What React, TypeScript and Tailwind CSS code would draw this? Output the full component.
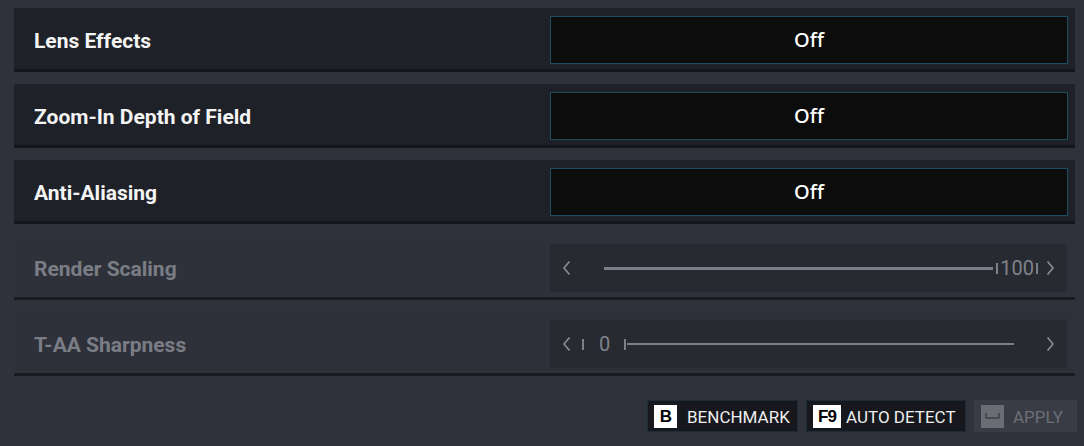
import React from "react";

const labelFont = { fontFamily: "Roboto, 'Noto Sans', sans-serif" };

function ChevronLeft() {
  return (
    <svg width="9" height="16" viewBox="0 0 9 16" className="shrink-0">
      <path d="M7.5 1.5 L2 8 L7.5 14.5" fill="none" stroke="#8a8d95" strokeWidth="1.6" />
    </svg>
  );
}
function ChevronRight() {
  return (
    <svg width="9" height="16" viewBox="0 0 9 16" className="shrink-0">
      <path d="M1.5 1.5 L7 8 L1.5 14.5" fill="none" stroke="#8a8d95" strokeWidth="1.6" />
    </svg>
  );
}
function Tick() {
  return <div className="w-[2px] h-[11px] bg-[#7d8088] shrink-0" />;
}

function ToggleRow({ label }: { label: string }) {
  return (
    <div className="h-16 flex items-start pt-2 pl-5 pr-[7px] bg-[#1f2128] border-b-[3px] border-[#15161b]">
      <div
        className="flex-1 h-12 flex items-center pt-[3px] text-[21px] font-bold text-[#f4f4f4]"
        style={labelFont}
      >
        {label}
      </div>
      <div
        className="w-[518px] h-12 flex items-center justify-center bg-[#0c0c0d] border border-[#1e4d61] text-[20px] font-medium text-white"
        style={{ fontFamily: "'Noto Sans', 'Open Sans', sans-serif" }}
      >
        Off
      </div>
    </div>
  );
}

function SliderRow({ label, children }: { label: string; children: React.ReactNode }) {
  return (
    <div className="h-16 flex items-start pt-2 pl-5 pr-[8px] bg-[#2f313a] border-b-[3px] border-[#1a1b20]">
      <div
        className="flex-1 h-12 flex items-center pt-[3px] text-[21px] font-bold text-[#7a7d85]"
        style={labelFont}
      >
        {label}
      </div>
      <div className="w-[517px] h-12 flex items-center px-3 bg-[#282a32] text-[#80838b]" style={labelFont}>
        {children}
      </div>
    </div>
  );
}

function KeyBadge({ text, w, disabled }: { text: string; w: string; disabled?: boolean }) {
  return (
    <div
      className={
        "h-[23px] flex items-center justify-center shrink-0 " +
        w +
        (disabled ? " bg-[#6b6d75]" : " bg-white")
      }
    >
      {disabled ? (
        <svg width="15" height="8" viewBox="0 0 15 8">
          <path d="M1 1 V6 H14 V1" fill="none" stroke="#3c3e46" strokeWidth="1.4" />
        </svg>
      ) : (
        <span
          className="text-[17px] font-black text-black leading-none tracking-[-1px]"
          style={{ fontFamily: "'Liberation Sans', Arial, sans-serif" }}
        >
          {text}
        </span>
      )}
    </div>
  );
}

export default function App() {
  return (
    <div className="w-[1084px] h-[446px] bg-[#30323b] overflow-hidden">
      <div className="pt-2 pl-[14px] pr-[9px] flex flex-col gap-3">
        <ToggleRow label="Lens Effects" />
        <ToggleRow label="Zoom-In Depth of Field" />
        <ToggleRow label="Anti-Aliasing" />
        <SliderRow label="Render Scaling">
          <ChevronLeft />
          <div className="ml-[33px] flex-1 h-[3px] bg-[#7b7e86]" />
          <div className="ml-[3px]">
            <Tick />
          </div>
          <span className="text-[20px] ml-[2px] leading-none">100</span>
          <div className="ml-[2px]">
            <Tick />
          </div>
          <div className="ml-[8px]">
            <ChevronRight />
          </div>
        </SliderRow>
        <SliderRow label="T-AA Sharpness">
          <ChevronLeft />
          <div className="ml-[11px]">
            <Tick />
          </div>
          <span className="text-[20px] ml-[15px] leading-none">0</span>
          <div className="ml-[14px]">
            <Tick />
          </div>
          <div className="w-[387px] h-[2px] ml-[1px] bg-[#7b7e86]" />
          <div className="flex-1" />
          <ChevronRight />
        </SliderRow>
      </div>
      <div className="mt-6 flex justify-end gap-2 pr-[7px]" style={labelFont}>
        <div className="w-[151px] h-8 flex items-center pl-[6px] bg-[#16181d] border border-[#1d2c37]">
          <KeyBadge text="B" w="w-[23px]" />
          <span className="ml-[10px] pt-[2px] text-[17px] text-[#eeeeee] leading-none">BENCHMARK</span>
        </div>
        <div className="w-[160px] h-8 flex items-center pl-[6px] bg-[#16181d] border border-[#1d2c37]">
          <KeyBadge text="F9" w="w-[28px]" />
          <span className="ml-[5px] pt-[2px] text-[17px] text-[#eeeeee] leading-none">AUTO DETECT</span>
        </div>
        <div className="w-[103px] h-8 flex items-center pl-[7px] bg-[#3a3c45]">
          <KeyBadge text="" w="w-[23px]" disabled />
          <span className="ml-[9px] pt-[2px] text-[17px] text-[#6c6f77] leading-none">APPLY</span>
        </div>
      </div>
    </div>
  );
}
